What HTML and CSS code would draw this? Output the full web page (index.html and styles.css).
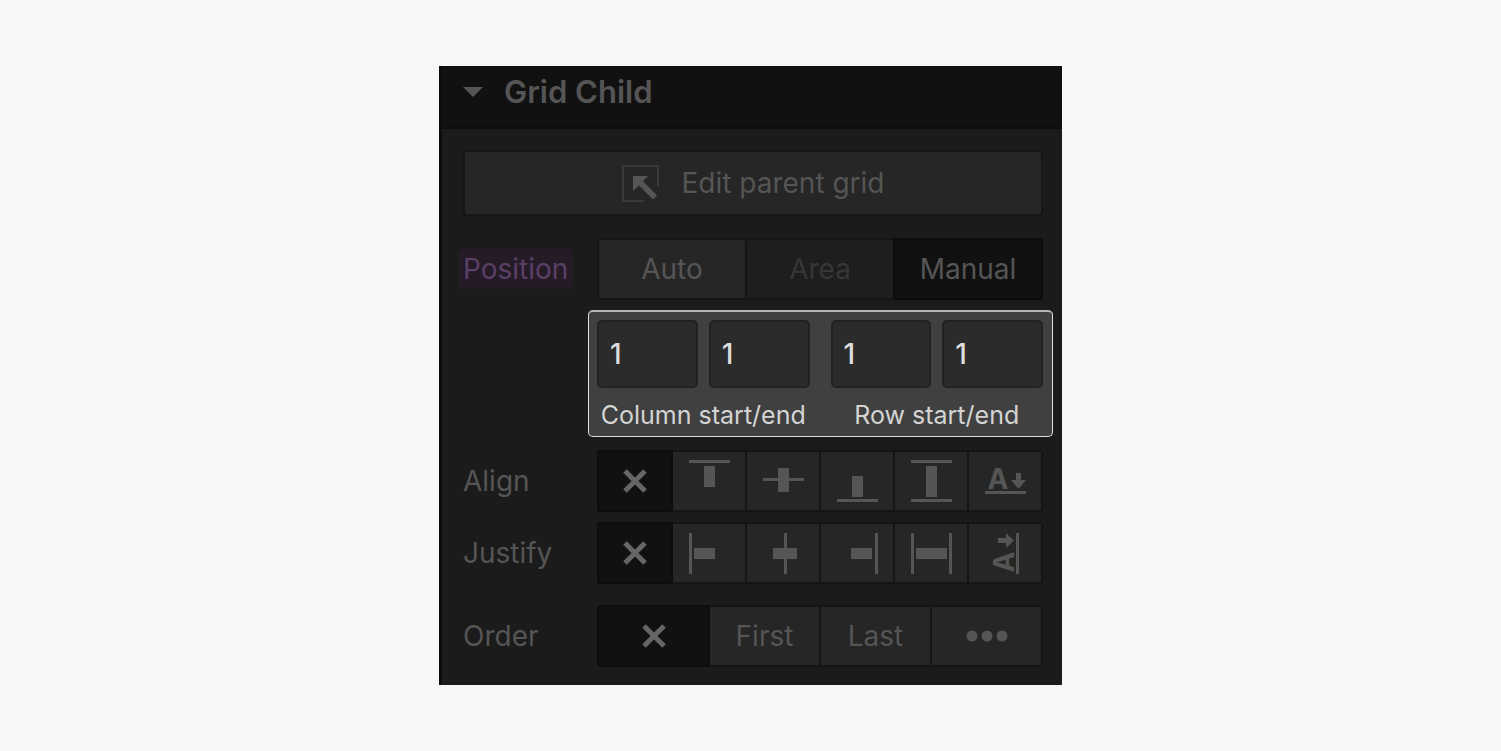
FILE: index.html
```html
<!DOCTYPE html>
<html lang="en">
<head>
<meta charset="utf-8">
<meta name="viewport" content="width=device-width, initial-scale=1">
<title>Grid Child</title>
<link rel="stylesheet" href="styles.css">
</head>
<body>
<main class="panel">
  <h2 class="panel-header">
    <button class="panel-toggle" type="button" aria-expanded="true">
      <svg class="caret" width="20" height="10" viewBox="0 0 20 10" aria-hidden="true"><path d="M0 0H20L10 10Z"/></svg>
      Grid Child
    </button>
  </h2>
  <div class="panel-body">
    <button class="edit-button" type="button">
      <svg width="37" height="37" viewBox="0 0 37 37" aria-hidden="true">
        <path class="frame" d="M36 21V1H1V36H22"/>
        <path d="M11 11H26L21 16L35 30.500L31 34.500L17 20.500L11 26Z"/>
      </svg>
      Edit parent grid
    </button>

    <div class="row">
      <span class="label tag" id="position-label">Position</span>
      <div class="segments thirds" role="group" aria-labelledby="position-label">
        <button class="segment" type="button">Auto</button>
        <button class="segment muted" type="button" disabled>Area</button>
        <button class="segment selected" type="button" aria-pressed="true">Manual</button>
      </div>
    </div>

    <div class="row placement">
      <div class="highlight">
        <div class="span-group" role="group" aria-labelledby="column-caption">
          <input class="field" type="text" value="1" aria-label="Column start">
          <input class="field" type="text" value="1" aria-label="Column end">
          <span class="caption" id="column-caption">Column start/end</span>
        </div>
        <div class="span-group" role="group" aria-labelledby="row-caption">
          <input class="field" type="text" value="1" aria-label="Row start">
          <input class="field" type="text" value="1" aria-label="Row end">
          <span class="caption" id="row-caption">Row start/end</span>
        </div>
      </div>
    </div>

    <div class="row align">
      <span class="label" id="align-label">Align</span>
      <div class="segments sixths" role="group" aria-labelledby="align-label">
        <button class="segment selected" type="button" aria-pressed="true" aria-label="None">
          <svg width="24" height="24" viewBox="0 0 24 24"><path class="cross" d="M2 2L22 22M22 2L2 22"/></svg>
        </button>
        <button class="segment" type="button" aria-label="Start">
          <svg width="41" height="42" viewBox="0 0 41 42"><path d="M0 0H41V3H0ZM15 6H26V27H15Z"/></svg>
        </button>
        <button class="segment" type="button" aria-label="Center">
          <svg width="41" height="42" viewBox="0 0 41 42"><path d="M0 18H41V21H0ZM15 8H26V32H15Z"/></svg>
        </button>
        <button class="segment" type="button" aria-label="End">
          <svg width="41" height="42" viewBox="0 0 41 42"><path d="M0 39H41V42H0ZM15 16H26V37H15Z"/></svg>
        </button>
        <button class="segment" type="button" aria-label="Stretch">
          <svg width="41" height="42" viewBox="0 0 41 42"><path d="M0 0H41V3H0ZM0 39H41V42H0ZM15 6H26V37H15Z"/></svg>
        </button>
        <button class="segment" type="button" aria-label="Baseline">
          <svg width="41" height="42" viewBox="0 0 41 42"><text class="letter" x="13" y="29">A</text><path d="M0 31H41V34H0ZM31 13H36V20H41L33.500 29L26 20H31Z"/></svg>
        </button>
      </div>
    </div>

    <div class="row justify">
      <span class="label" id="justify-label">Justify</span>
      <div class="segments sixths" role="group" aria-labelledby="justify-label">
        <button class="segment selected" type="button" aria-pressed="true" aria-label="None">
          <svg width="24" height="24" viewBox="0 0 24 24"><path class="cross" d="M2 2L22 22M22 2L2 22"/></svg>
        </button>
        <button class="segment" type="button" aria-label="Start">
          <svg width="41" height="42" viewBox="0 0 41 42"><path d="M0 1H3V42H0ZM5 16H26V27H5Z"/></svg>
        </button>
        <button class="segment" type="button" aria-label="Center">
          <svg width="41" height="42" viewBox="0 0 41 42"><path d="M21 1H24V42H21ZM10 16H34V27H10Z"/></svg>
        </button>
        <button class="segment" type="button" aria-label="End">
          <svg width="41" height="42" viewBox="0 0 41 42"><path d="M38 1H41V42H38ZM14 16H35V27H14Z"/></svg>
        </button>
        <button class="segment" type="button" aria-label="Stretch">
          <svg width="41" height="42" viewBox="0 0 41 42"><path d="M0 1H3V42H0ZM38 1H41V42H38ZM5 16H36V27H5Z"/></svg>
        </button>
        <button class="segment" type="button" aria-label="Baseline">
          <svg width="41" height="42" viewBox="0 0 41 42"><text class="letter" transform="translate(29 30) rotate(-90)">A</text><path d="M31 1H34V42H31ZM13 6H21V1L29 8.500L21 16V11H13Z"/></svg>
        </button>
      </div>
    </div>

    <div class="row order">
      <span class="label" id="order-label">Order</span>
      <div class="segments quarters" role="group" aria-labelledby="order-label">
        <button class="segment selected" type="button" aria-pressed="true" aria-label="None">
          <svg width="24" height="24" viewBox="0 0 24 24"><path class="cross" d="M2 2L22 22M22 2L2 22"/></svg>
        </button>
        <button class="segment" type="button">First</button>
        <button class="segment" type="button">Last</button>
        <button class="segment" type="button" aria-label="Custom">
          <svg width="42" height="12" viewBox="0 0 42 12"><circle cx="6" cy="6" r="5.500"/><circle cx="21" cy="6" r="5.500"/><circle cx="36" cy="6" r="5.500"/></svg>
        </button>
      </div>
    </div>
  </div>
</main>
</body>
</html>
```

FILE: styles.css
```css
* {
  box-sizing: border-box;
}

body {
  margin: 0;
  min-height: 100vh;
  display: flex;
  align-items: center;
  justify-content: center;
  background: #f6f7f9;
  color: #555;
  font-family: Inter, "Liberation Sans", sans-serif;
  font-size: 28px;
  line-height: 40px;
}

button,
input {
  font: inherit;
  color: inherit;
  margin: 0;
}

svg {
  display: block;
  flex: none;
  fill: #555;
}

.panel {
  width: 100%;
  max-width: 623px;
  background: #1b1b1b;
  border-left: 3px solid #0c0c0c;
}

.panel-header {
  margin: 0;
  padding: 6px 21px 15px;
  background: #111;
  border-bottom: 2px solid #0c0c0c;
  font-size: 31px;
  font-weight: 600;
}

.panel-toggle {
  display: flex;
  align-items: center;
  gap: 21px;
  padding: 0;
  border: 0;
  background: none;
}

.panel-body {
  padding: 21px 19px 18px 21px;
}

.edit-button {
  display: flex;
  align-items: center;
  justify-content: center;
  gap: 23px;
  width: 100%;
  height: 66px;
  margin-bottom: 22px;
  padding: 0;
  background: #262626;
  border: 2px solid #161616;
  border-radius: 4px;
}

.frame {
  fill: none;
  stroke: #3a3a3a;
  stroke-width: 2;
}

.row {
  display: grid;
  grid-template-columns: 134px 1fr;
  align-items: center;
}

.label {
  justify-self: start;
}

.tag {
  margin-left: -5px;
  padding: 0 5px;
  background: #241b27;
  border-radius: 4px;
  color: #5a3f66;
}

.segments {
  display: grid;
  gap: 2px;
  height: 62px;
  padding: 2px;
  background: #151515;
  border-radius: 4px;
}

.thirds {
  grid-template-columns: repeat(3, 1fr);
}

.quarters {
  grid-template-columns: repeat(4, 1fr);
}

.sixths {
  grid-template-columns: repeat(6, 1fr);
}

.segment {
  display: flex;
  align-items: center;
  justify-content: center;
  min-width: 0;
  padding: 0;
  border: 0;
  border-radius: 1px;
  background: #262626;
}

.selected {
  background: #111;
  box-shadow: 0 0 0 2px #0d0d0d;
}

.selected svg {
  fill: #666;
}

.muted {
  background: #1e1e1e;
  color: #363636;
}

.cross {
  stroke: #666;
  stroke-width: 5;
}

.letter {
  font-size: 28px;
  font-weight: 700;
  text-anchor: middle;
}

.placement {
  margin: 10px 0 13px;
}

.highlight {
  grid-column: 2;
  display: grid;
  grid-template-columns: 1fr 1fr;
  gap: 21px;
  margin: 0 -10px 0 -9px;
  padding: 8px 9px 5px 8px;
  background: #404040;
  border: 1px solid #e0e0e0;
  border-top: 2px solid #b4b4b4;
  border-radius: 5px;
}

.span-group {
  display: grid;
  grid-template-columns: 1fr 1fr;
  gap: 11px;
}

.field {
  width: 100%;
  min-width: 0;
  height: 68px;
  padding: 0 11px;
  background: #2b2b2b;
  border: 2px solid #212121;
  border-radius: 5px;
  color: #ddd;
  font-weight: 500;
}

.caption {
  grid-column: 1 / -1;
  color: #d4d4d4;
  font-size: 25px;
  line-height: 32px;
  text-align: center;
  white-space: nowrap;
}

.justify {
  margin: 10px 0 21px;
}
```
